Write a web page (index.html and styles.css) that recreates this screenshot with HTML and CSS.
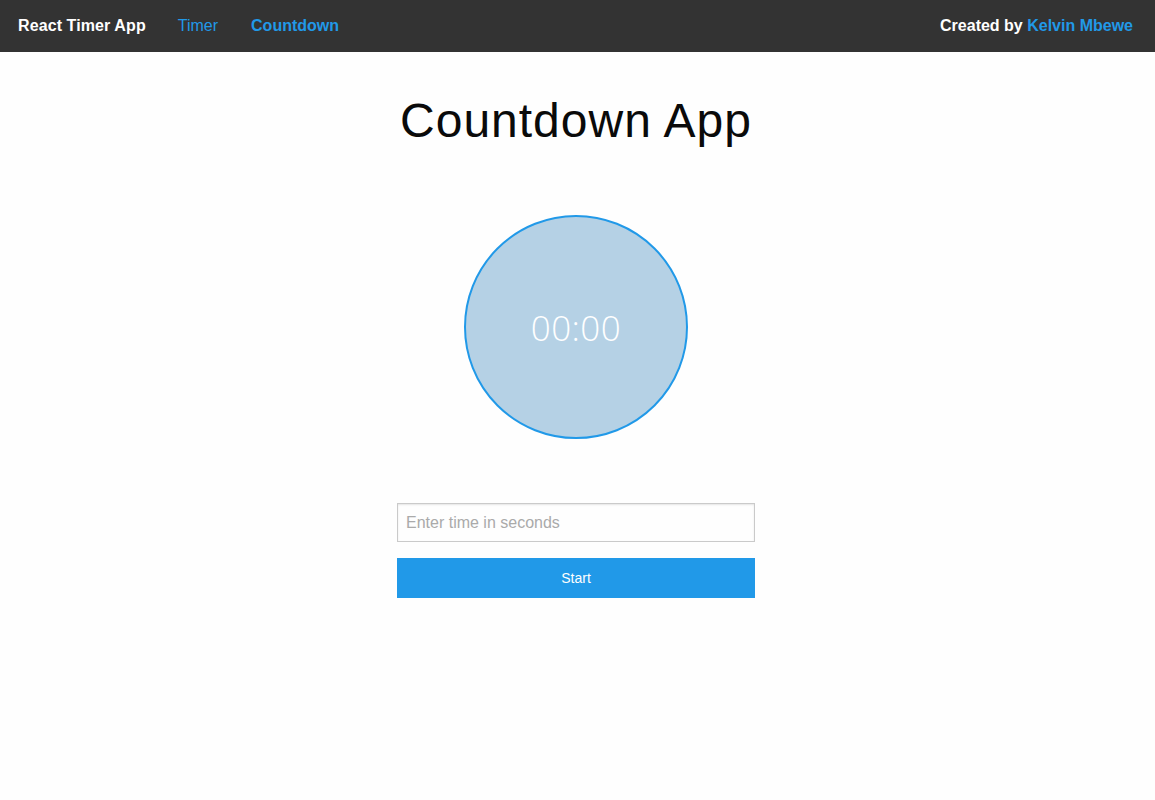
FILE: index.html
```html
<!DOCTYPE html>
<html lang="en">
<head>
<meta charset="utf-8">
<title>React Timer App</title>
<link rel="stylesheet" href="styles.css">
</head>
<body>
<header class="top-bar">
  <div class="top-left">
    <span class="brand">React Timer App</span>
    <a class="nav-link" href="#">Timer</a>
    <a class="nav-link active" href="#">Countdown</a>
  </div>
  <div class="top-right">
    Created by <a class="author" href="#">Kelvin Mbewe</a>
  </div>
</header>
<main class="content">
  <h1 class="page-title">Countdown App</h1>
  <div class="clock">
    <span class="clock-text">00:00</span>
  </div>
  <form class="countdown-form">
    <input class="time-input" type="text" placeholder="Enter time in seconds">
    <button class="start-button" type="button">Start</button>
  </form>
</main>
</body>
</html>
```

FILE: styles.css
```css
* {
  box-sizing: border-box;
}

html, body {
  margin: 0;
  padding: 0;
}

body {
  background: #fefefe;
  font-family: "Liberation Sans", Arial, sans-serif;
  color: #0a0a0a;
}

.top-bar {
  height: 52px;
  background: #333333;
  display: flex;
  align-items: center;
  justify-content: space-between;
  padding: 0 22px 0 18px;
  font-size: 16px;
}

.top-left {
  display: flex;
  align-items: center;
}

.brand {
  color: #ffffff;
  font-weight: bold;
  margin-right: 16px;
  letter-spacing: 0.1px;
}

.nav-link {
  color: #2199e8;
  text-decoration: none;
  padding: 0 16px;
}

.nav-link.active {
  font-weight: bold;
  padding-left: 17px;
}

.top-right {
  color: #ffffff;
  font-weight: bold;
}

.author {
  color: #2199e8;
  text-decoration: none;
}

.content {
  display: flex;
  flex-direction: column;
  align-items: center;
  padding-right: 3px;
}

.page-title {
  margin: 40px 0 0;
  font-size: 48px;
  font-weight: normal;
  line-height: 58px;
  letter-spacing: 1px;
}

.clock {
  margin-top: 65px;
  width: 224px;
  height: 224px;
  border-radius: 50%;
  border: 2px solid #2199e8;
  background: #b5d1e5;
  display: flex;
  align-items: center;
  justify-content: center;
}

.clock-text {
  color: #ffffff;
  font-family: "Open Sans", "Liberation Sans", sans-serif;
  font-weight: 300;
  font-size: 35px;
  letter-spacing: 0.4px;
}

.countdown-form {
  margin-top: 64px;
  width: 358px;
  display: flex;
  flex-direction: column;
}

.time-input {
  height: 39px;
  border: 1px solid #cacaca;
  background: #fefefe;
  padding: 8px;
  font-family: "Liberation Sans", Arial, sans-serif;
  font-size: 16px;
  color: #0a0a0a;
  box-shadow: inset 0 1px 2px rgba(10, 10, 10, 0.1);
  outline: none;
}

.time-input::placeholder {
  color: #aaaaaa;
}

.start-button {
  margin-top: 16px;
  height: 40px;
  border: none;
  background: #2199e8;
  color: #fefefe;
  font-family: "Liberation Sans", Arial, sans-serif;
  font-size: 14px;
  cursor: pointer;
}
```
